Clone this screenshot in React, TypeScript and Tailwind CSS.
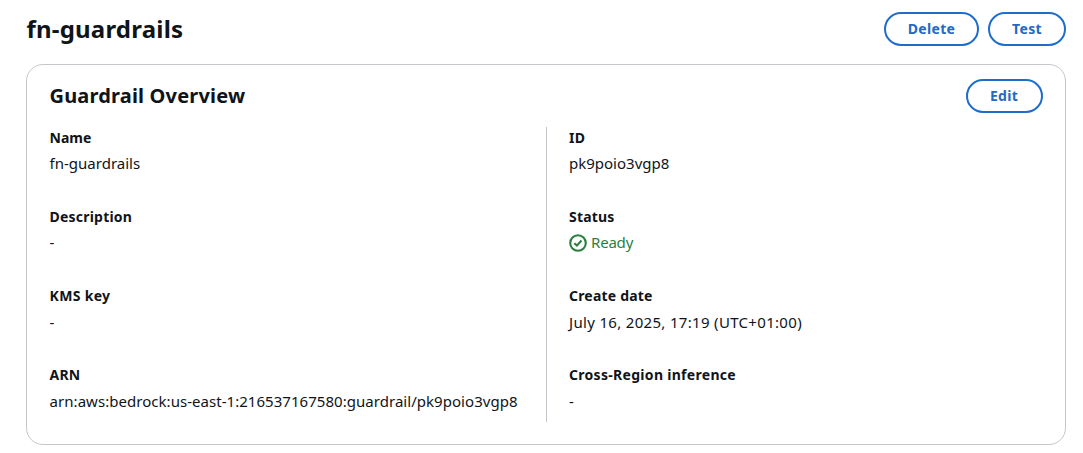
import React from "react";

type FieldProps = {
  name: string;
  labelClass?: string;
  valueClass?: string;
  children: React.ReactNode;
};

function Field({ name, labelClass = "tracking-[0.2px]", valueClass = "mt-[5px]", children }: FieldProps) {
  return (
    <div className="h-[79px] pt-px">
      <div className={`whitespace-nowrap text-[14px] font-bold leading-[20px] ${labelClass}`}>{name}</div>
      <div className={`whitespace-nowrap text-[15px] leading-[20px] ${valueClass}`}>{children}</div>
    </div>
  );
}

function PillButton({ className, children }: { className: string; children: React.ReactNode }) {
  return (
    <button
      type="button"
      className={`flex h-[34px] items-center justify-center rounded-full border-2 border-[#1f6dcb] bg-white pb-[2px] text-[14px] font-bold tracking-[0.3px] text-[#2469c4] ${className}`}
    >
      {children}
    </button>
  );
}

function SuccessIcon() {
  return (
    <svg className="mt-[2px] size-[18px] shrink-0" viewBox="0 0 18 18" fill="none" stroke="currentColor" strokeWidth="2.1" aria-hidden="true">
      <circle cx="9" cy="9" r="7.8" />
      <path d="M5.3 9.2 7.9 11.6 12.5 6.5" />
    </svg>
  );
}

export default function App() {
  return (
    <main className="h-[453px] overflow-hidden bg-white pl-[26px] pr-[17px] pt-[12px] font-['Noto_Sans',sans-serif] text-[#0f141a]">
      <header className="flex h-[34px] items-center justify-between">
        <h1 className="pl-[0.5px] text-[24px] font-bold leading-[34px] tracking-[0.2px]">fn-guardrails</h1>
        <div className="flex gap-[9px]">
          <PillButton className="w-[95px]">Delete</PillButton>
          <PillButton className="w-[78px]">Test</PillButton>
        </div>
      </header>
      <section className="mt-[18px] h-[381px] rounded-[17px] border border-[#c6c6cd] px-[22px] pt-[14px]">
        <div className="flex h-[34px] items-center justify-between">
          <h2 className="pl-[0.5px] text-[20px] font-bold leading-[34px] tracking-[0.18px]">Guardrail Overview</h2>
          <PillButton className="w-[77px] pr-px">Edit</PillButton>
        </div>
        <div className="mt-[14px] flex h-[295px]">
          <div className="w-[498px] border-r border-[#c6c6cd] pl-[0.6px]">
            <Field name="Name" labelClass="tracking-normal">fn-guardrails</Field>
            <Field name="Description">-</Field>
            <Field name="KMS key" labelClass="tracking-[0.32px]" valueClass="mt-[6px]">-</Field>
            <Field name="ARN" valueClass="mt-[6px] tracking-[0.04px]">
              arn:aws:bedrock:us-east-1:216537167580:guardrail/pk9poio3vgp8
            </Field>
          </div>
          <div className="pl-[22px]">
            <Field name="ID">pk9poio3vgp8</Field>
            <Field name="Status">
              <span className="flex items-start gap-[4px] tracking-[-0.2px] text-[#2a7f3f]">
                <SuccessIcon />
                Ready
              </span>
            </Field>
            <Field name="Create date" valueClass="mt-[6px] tracking-[0.32px]">July 16, 2025, 17:19 (UTC+01:00)</Field>
            <Field name="Cross-Region inference" labelClass="tracking-[0.3px]" valueClass="mt-[6px]">-</Field>
          </div>
        </div>
      </section>
    </main>
  );
}
